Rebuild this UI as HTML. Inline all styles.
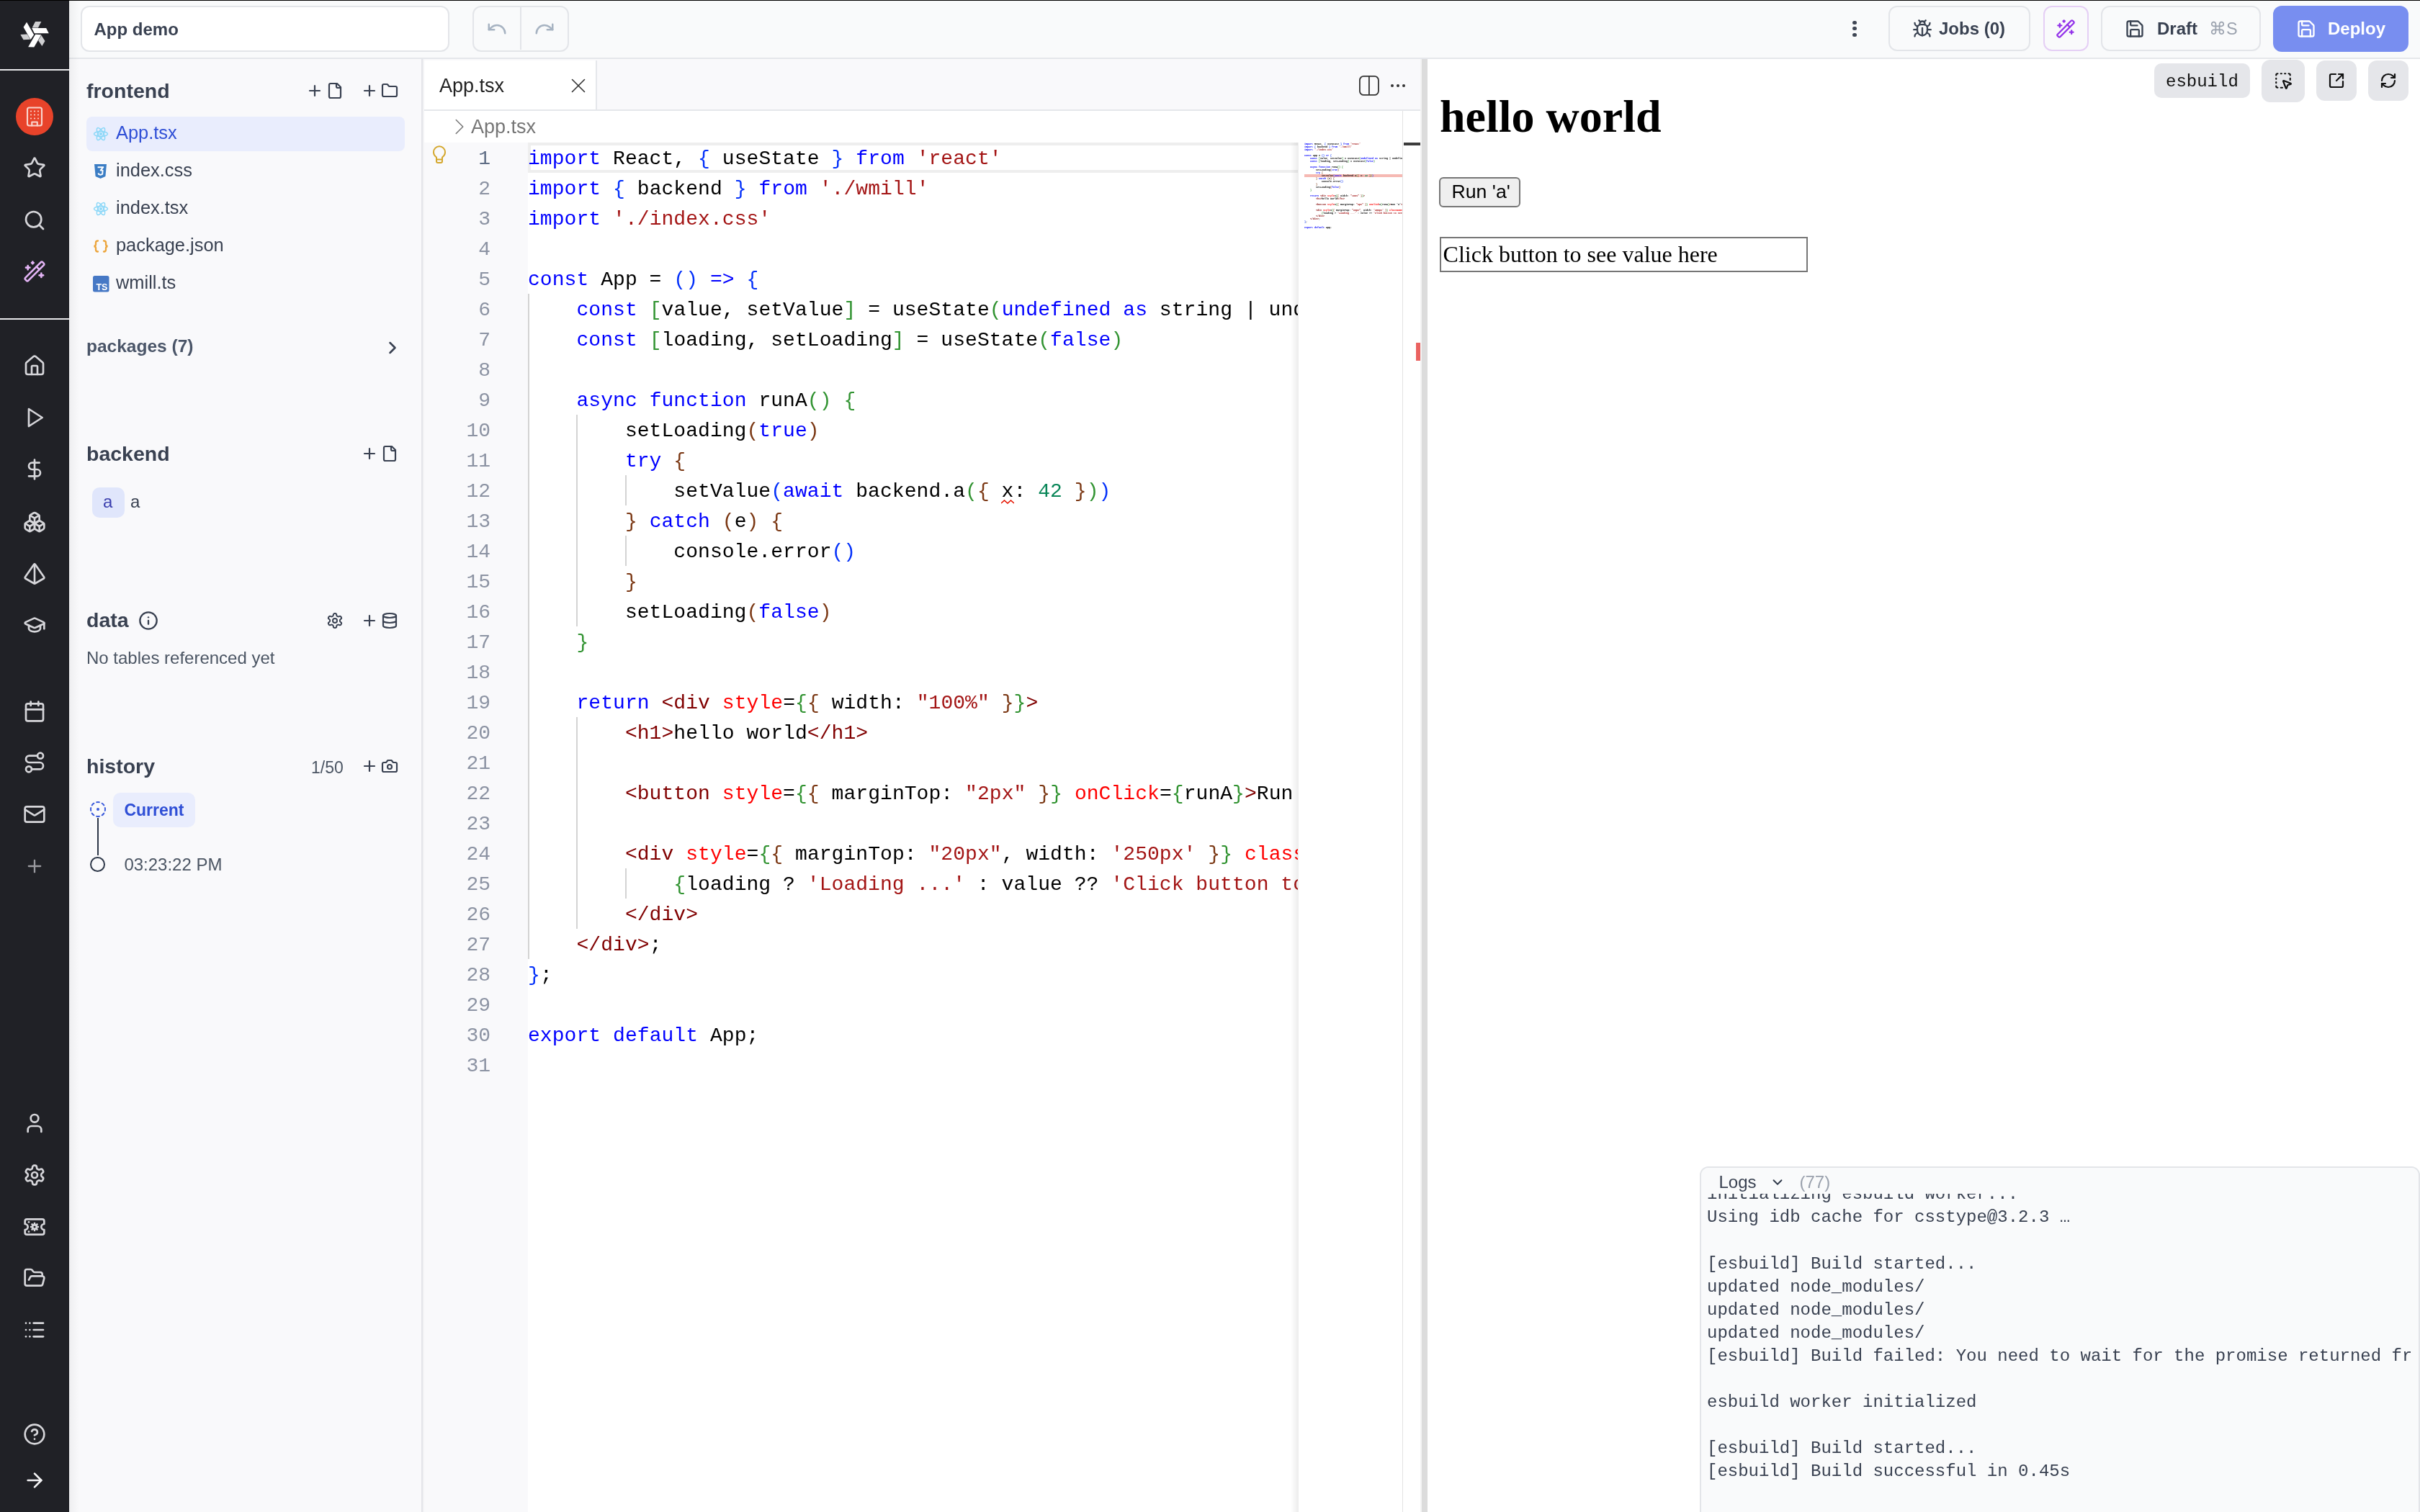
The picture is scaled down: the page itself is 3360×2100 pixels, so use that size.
<!DOCTYPE html><html><head><meta charset="utf-8"><title>App demo</title><style>html,body{margin:0;padding:0;overflow:hidden;background:#fff}body{width:3360px;height:2100px;position:relative}svg{display:block}#root{position:absolute;left:0;top:0;width:3360px;height:2100px;will-change:transform}</style></head><body><div id="root">
<div style="position:absolute;left:0px;top:0px;width:96px;height:2100px;background:#202126"></div>
<div style="position:absolute;left:96px;top:0px;width:3264px;height:80px;background:#f9fafb"></div>
<div style="position:absolute;left:0px;top:0px;width:3360px;height:1px;background:#000"></div>
<div style="position:absolute;left:96px;top:80px;width:3264px;height:2px;background:#e5e7eb"></div>
<div style="position:absolute;left:96px;top:82px;width:490px;height:2018px;background:#f9f9fb"></div>
<div style="position:absolute;left:96px;top:0px;width:14px;height:2100px;background:linear-gradient(90deg,rgba(0,0,0,0.045),rgba(0,0,0,0))"></div>
<div style="position:absolute;left:585px;top:82px;width:2px;height:2018px;background:#e3e4e9"></div>
<div style="position:absolute;left:587px;top:82px;width:2px;height:2018px;background:#f3f3f5"></div>
<div style="position:absolute;left:0px;top:96px;width:96px;height:2px;background:#e8e8ea"></div>
<div style="position:absolute;left:0px;top:442px;width:96px;height:2px;background:#e8e8ea"></div>
<svg style="position:absolute;left:18px;top:18px" width="60" height="60" viewBox="0 0 60 60"><g transform="translate(30,29.4)"><g transform="rotate(0)"><polygon points="-3.8,-8.5 16.1,-8.5 19.8,-1.2 -0.2,-1.2" fill="#ffffff"/><polygon points="1.0,-17.3 9.3,-17.3 5.0,-8.9 -3.4,-8.9" fill="#cfcfd1"/></g><g transform="rotate(120)"><polygon points="-3.8,-8.5 16.1,-8.5 19.8,-1.2 -0.2,-1.2" fill="#ffffff"/><polygon points="1.0,-17.3 9.3,-17.3 5.0,-8.9 -3.4,-8.9" fill="#cfcfd1"/></g><g transform="rotate(240)"><polygon points="-3.8,-8.5 16.1,-8.5 19.8,-1.2 -0.2,-1.2" fill="#ffffff"/><polygon points="1.0,-17.3 9.3,-17.3 5.0,-8.9 -3.4,-8.9" fill="#cfcfd1"/></g></g></svg>
<div style="position:absolute;left:22px;top:136px;width:52px;height:52px;border-radius:50%;background:#e8432a"></div>
<svg style="position:absolute;left:33.00px;top:147.00px;" width="30" height="30" viewBox="0 0 24 24" fill="none" stroke="#f9d5cd" stroke-width="1.7" stroke-linecap="round" stroke-linejoin="round"><rect width="16" height="20" x="4" y="2" rx="2" ry="2"/><path d="M9 22v-4h6v4"/><path d="M8 6h.01"/><path d="M16 6h.01"/><path d="M12 6h.01"/><path d="M12 10h.01"/><path d="M12 14h.01"/><path d="M16 10h.01"/><path d="M16 14h.01"/><path d="M8 10h.01"/><path d="M8 14h.01"/></svg>
<svg style="position:absolute;left:32.00px;top:217.00px;" width="32" height="32" viewBox="0 0 24 24" fill="none" stroke="#d6d6da" stroke-width="2" stroke-linecap="round" stroke-linejoin="round"><path d="M11.525 2.295a.53.53 0 0 1 .95 0l2.31 4.679a2.123 2.123 0 0 0 1.595 1.16l5.166.756a.53.53 0 0 1 .294.904l-3.736 3.638a2.123 2.123 0 0 0-.611 1.878l.882 5.14a.53.53 0 0 1-.771.56l-4.618-2.428a2.122 2.122 0 0 0-1.973 0L6.396 21.01a.53.53 0 0 1-.77-.56l.881-5.139a2.122 2.122 0 0 0-.611-1.879L2.16 9.795a.53.53 0 0 1 .294-.906l5.165-.755a2.122 2.122 0 0 0 1.597-1.16z"/></svg>
<svg style="position:absolute;left:32.00px;top:289.50px;" width="32" height="32" viewBox="0 0 24 24" fill="none" stroke="#d6d6da" stroke-width="2" stroke-linecap="round" stroke-linejoin="round"><circle cx="11" cy="11" r="8"/><path d="m21 21-4.3-4.3"/></svg>
<svg style="position:absolute;left:32.00px;top:361.00px;" width="32" height="32" viewBox="0 0 24 24" fill="none" stroke="#e3b4f5" stroke-width="2" stroke-linecap="round" stroke-linejoin="round"><path d="m21.64 3.64-1.28-1.28a1.21 1.21 0 0 0-1.72 0L2.36 18.64a1.21 1.21 0 0 0 0 1.72l1.28 1.28a1.2 1.2 0 0 0 1.72 0L21.64 5.36a1.2 1.2 0 0 0 0-1.72"/><path d="m14 7 3 3"/><path d="M5 6v4"/><path d="M19 14v4"/><path d="M10 2v2"/><path d="M7 8H3"/><path d="M21 16h-4"/><path d="M11 3H9"/></svg>
<svg style="position:absolute;left:32.00px;top:491.50px;" width="32" height="32" viewBox="0 0 24 24" fill="none" stroke="#d6d6da" stroke-width="2" stroke-linecap="round" stroke-linejoin="round"><path d="M15 21v-8a1 1 0 0 0-1-1h-4a1 1 0 0 0-1 1v8"/><path d="M3 10a2 2 0 0 1 .709-1.528l7-5.999a2 2 0 0 1 2.582 0l7 5.999A2 2 0 0 1 21 10v9a2 2 0 0 1-2 2H5a2 2 0 0 1-2-2z"/></svg>
<svg style="position:absolute;left:32.00px;top:564.00px;" width="32" height="32" viewBox="0 0 24 24" fill="none" stroke="#d6d6da" stroke-width="2" stroke-linecap="round" stroke-linejoin="round"><polygon points="6 3 20 12 6 21 6 3"/></svg>
<svg style="position:absolute;left:32.00px;top:635.50px;" width="32" height="32" viewBox="0 0 24 24" fill="none" stroke="#d6d6da" stroke-width="2" stroke-linecap="round" stroke-linejoin="round"><line x1="12" x2="12" y1="2" y2="22"/><path d="M17 5H9.5a3.5 3.5 0 0 0 0 7h5a3.5 3.5 0 0 1 0 7H6"/></svg>
<svg style="position:absolute;left:32.00px;top:709.00px;" width="32" height="32" viewBox="0 0 24 24" fill="none" stroke="#d6d6da" stroke-width="2" stroke-linecap="round" stroke-linejoin="round"><path d="M2.97 12.92A2 2 0 0 0 2 14.63v3.24a2 2 0 0 0 .97 1.71l3 1.8a2 2 0 0 0 2.06 0L12 19v-5.5l-5-3-4.03 2.42Z"/><path d="m7 16.5-4.74-2.85"/><path d="m7 16.5 5-3"/><path d="M7 16.5v5.17"/><path d="M12 13.5V19l3.97 2.38a2 2 0 0 0 2.06 0l3-1.8a2 2 0 0 0 .97-1.71v-3.24a2 2 0 0 0-.97-1.71L17 10.5l-5 3Z"/><path d="m17 16.5-5-3"/><path d="m17 16.5 4.74-2.85"/><path d="M17 16.5v5.17"/><path d="M7.97 4.42A2 2 0 0 0 7 6.13v4.37l5 3 5-3V6.13a2 2 0 0 0-.97-1.71l-3-1.8a2 2 0 0 0-2.06 0l-3 1.8Z"/><path d="M12 8 7.26 5.15"/><path d="m12 8 4.74-2.85"/><path d="M12 13.5V8"/></svg>
<svg style="position:absolute;left:32.00px;top:781.00px;" width="32" height="32" viewBox="0 0 24 24" fill="none" stroke="#d6d6da" stroke-width="2" stroke-linecap="round" stroke-linejoin="round"><path d="M2.5 16.88a1 1 0 0 1-.32-1.43l9-13.02a1 1 0 0 1 1.64 0l9 13.01a1 1 0 0 1-.32 1.44l-8.51 4.86a2 2 0 0 1-1.98 0Z"/><path d="M12 2v20"/></svg>
<svg style="position:absolute;left:32.00px;top:851.50px;" width="32" height="32" viewBox="0 0 24 24" fill="none" stroke="#d6d6da" stroke-width="2" stroke-linecap="round" stroke-linejoin="round"><path d="M21.42 10.922a1 1 0 0 0-.019-1.838L12.83 5.18a2 2 0 0 0-1.66 0L2.6 9.08a1 1 0 0 0 0 1.832l8.57 3.908a2 2 0 0 0 1.66 0z"/><path d="M22 10v6"/><path d="M6 12.5V16a6 3 0 0 0 12 0v-3.5"/></svg>
<svg style="position:absolute;left:32.00px;top:971.50px;" width="32" height="32" viewBox="0 0 24 24" fill="none" stroke="#d6d6da" stroke-width="2" stroke-linecap="round" stroke-linejoin="round"><path d="M8 2v4"/><path d="M16 2v4"/><rect width="18" height="18" x="3" y="4" rx="2"/><path d="M3 10h18"/></svg>
<svg style="position:absolute;left:32.00px;top:1043.00px;" width="32" height="32" viewBox="0 0 24 24" fill="none" stroke="#d6d6da" stroke-width="2" stroke-linecap="round" stroke-linejoin="round"><circle cx="6" cy="19" r="3"/><path d="M9 19h8.5a3.5 3.5 0 0 0 0-7h-11a3.5 3.5 0 0 1 0-7H15"/><circle cx="18" cy="5" r="3"/></svg>
<svg style="position:absolute;left:32.00px;top:1114.50px;" width="32" height="32" viewBox="0 0 24 24" fill="none" stroke="#d6d6da" stroke-width="2" stroke-linecap="round" stroke-linejoin="round"><rect width="20" height="16" x="2" y="4" rx="2"/><path d="m22 7-8.97 5.7a1.94 1.94 0 0 1-2.06 0L2 7"/></svg>
<svg style="position:absolute;left:32.00px;top:1543.50px;" width="32" height="32" viewBox="0 0 24 24" fill="none" stroke="#d6d6da" stroke-width="2" stroke-linecap="round" stroke-linejoin="round"><path d="M19 21v-2a4 4 0 0 0-4-4H9a4 4 0 0 0-4 4v2"/><circle cx="12" cy="7" r="4"/></svg>
<svg style="position:absolute;left:32.00px;top:1615.50px;" width="32" height="32" viewBox="0 0 24 24" fill="none" stroke="#d6d6da" stroke-width="2" stroke-linecap="round" stroke-linejoin="round"><path d="M12.22 2h-.44a2 2 0 0 0-2 2v.18a2 2 0 0 1-1 1.73l-.43.25a2 2 0 0 1-2 0l-.15-.08a2 2 0 0 0-2.73.73l-.22.38a2 2 0 0 0 .73 2.73l.15.1a2 2 0 0 1 1 1.72v.51a2 2 0 0 1-1 1.74l-.15.09a2 2 0 0 0-.73 2.73l.22.38a2 2 0 0 0 2.73.73l.15-.08a2 2 0 0 1 2 0l.43.25a2 2 0 0 1 1 1.73V20a2 2 0 0 0 2 2h.44a2 2 0 0 0 2-2v-.18a2 2 0 0 1 1-1.73l.43-.25a2 2 0 0 1 2 0l.15.08a2 2 0 0 0 2.73-.73l.22-.39a2 2 0 0 0-.73-2.73l-.15-.08a2 2 0 0 1-1-1.74v-.5a2 2 0 0 1 1-1.74l.15-.09a2 2 0 0 0 .73-2.73l-.22-.38a2 2 0 0 0-2.73-.73l-.15.08a2 2 0 0 1-2 0l-.43-.25a2 2 0 0 1-1-1.73V4a2 2 0 0 0-2-2z"/><circle cx="12" cy="12" r="3"/></svg>
<svg style="position:absolute;left:32.00px;top:1687.50px;" width="32" height="32" viewBox="0 0 24 24" fill="none" stroke="#d6d6da" stroke-width="2" stroke-linecap="round" stroke-linejoin="round"><path d="M4 4h16a2 2 0 0 1 2 2v3a2 2 0 0 0 0 6v3a2 2 0 0 1-2 2H4a2 2 0 0 1-2-2v-3a2 2 0 0 0 0-6V6a2 2 0 0 1 2-2z"/><circle cx="12" cy="12" r="2.2"/><path d="M12 8.3v1.4"/><path d="M12 14.3v1.4"/><path d="M8.3 12h1.4"/><path d="M14.3 12h1.4"/><path d="M9.4 9.4l1 1"/><path d="M13.6 13.6l1 1"/><path d="M14.6 9.4l-1 1"/><path d="M10.4 13.6l-1 1"/><path d="M6 7h.01"/><path d="M6 17h.01"/></svg>
<svg style="position:absolute;left:32.00px;top:1759.00px;" width="32" height="32" viewBox="0 0 24 24" fill="none" stroke="#d6d6da" stroke-width="2" stroke-linecap="round" stroke-linejoin="round"><path d="m6 14 1.5-2.9A2 2 0 0 1 9.24 10H20a2 2 0 0 1 1.94 2.5l-1.54 6a2 2 0 0 1-1.95 1.5H4a2 2 0 0 1-2-2V5a2 2 0 0 1 2-2h3.9a2 2 0 0 1 1.69.9l.81 1.2a2 2 0 0 0 1.67.9H18a2 2 0 0 1 2 2v2"/></svg>
<svg style="position:absolute;left:32.00px;top:1831.00px;" width="32" height="32" viewBox="0 0 24 24" fill="none" stroke="#d6d6da" stroke-width="2" stroke-linecap="round" stroke-linejoin="round"><path d="M3 5h.01"/><path d="M7 5h.01"/><path d="M3 12h.01"/><path d="M7 12h.01"/><path d="M3 19h.01"/><path d="M7 19h.01"/><path d="M11 5h10"/><path d="M11 12h10"/><path d="M11 19h10"/></svg>
<svg style="position:absolute;left:32.00px;top:1976.00px;" width="32" height="32" viewBox="0 0 24 24" fill="none" stroke="#d6d6da" stroke-width="2" stroke-linecap="round" stroke-linejoin="round"><circle cx="12" cy="12" r="10"/><path d="M9.09 9a3 3 0 0 1 5.83 1c0 2-3 3-3 3"/><path d="M12 17h.01"/></svg>
<svg style="position:absolute;left:32.00px;top:2039.50px;" width="32" height="32" viewBox="0 0 24 24" fill="none" stroke="#f4f4f5" stroke-width="2" stroke-linecap="round" stroke-linejoin="round"><path d="M5 12h14"/><path d="m12 5 7 7-7 7"/></svg>
<svg style="position:absolute;left:34.00px;top:1189.00px;" width="28" height="28" viewBox="0 0 24 24" fill="none" stroke="#9a9aa0" stroke-width="2" stroke-linecap="round" stroke-linejoin="round"><path d="M5 12h14"/><path d="M12 5v14"/></svg>
<div style="position:absolute;left:112px;top:8px;width:508px;height:59.5px;border:2px solid #e3e5e9;border-radius:12px;background:#fff"></div>
<div style="position:absolute;left:130.50px;top:29.48px;font:700 24px/24px 'Liberation Sans', sans-serif;color:#394151;white-space:pre;">App demo</div>
<div style="position:absolute;left:656px;top:8px;width:130px;height:59.5px;border:2px solid #e3e5e9;border-radius:12px"></div>
<div style="position:absolute;left:721.5px;top:10px;width:2px;height:59px;background:#e3e5e9"></div>
<svg style="position:absolute;left:675.00px;top:25.00px;" width="30" height="30" viewBox="0 0 24 24" fill="none" stroke="#a7b3c2" stroke-width="2" stroke-linecap="round" stroke-linejoin="round"><path d="M3 7v6h6"/><path d="M21 17a9 9 0 0 0-9-9 9 9 0 0 0-6 2.3L3 13"/></svg>
<svg style="position:absolute;left:741.00px;top:25.00px;" width="30" height="30" viewBox="0 0 24 24" fill="none" stroke="#a7b3c2" stroke-width="2" stroke-linecap="round" stroke-linejoin="round"><path d="M21 7v6h-6"/><path d="M3 17a9 9 0 0 1 9-9 9 9 0 0 1 6 2.3l3 2.7"/></svg>
<div style="position:absolute;left:2572.4px;top:28.8px;width:5.2px;height:5.2px;border-radius:50%;background:#3f4654"></div>
<div style="position:absolute;left:2572.4px;top:37.2px;width:5.2px;height:5.2px;border-radius:50%;background:#3f4654"></div>
<div style="position:absolute;left:2572.4px;top:45.7px;width:5.2px;height:5.2px;border-radius:50%;background:#3f4654"></div>
<div style="position:absolute;left:2622px;top:8px;width:193px;height:59px;border:2px solid #e3e5e9;border-radius:12px"></div>
<svg style="position:absolute;left:2655.00px;top:26.00px;" width="28" height="28" viewBox="0 0 24 24" fill="none" stroke="#3a4352" stroke-width="2" stroke-linecap="round" stroke-linejoin="round"><path d="m8 2 1.88 1.88"/><path d="M14.12 3.88 16 2"/><path d="M9 7.13v-1a3.003 3.003 0 1 1 6 0v1"/><path d="M12 20c-3.3 0-6-2.7-6-6v-3a4 4 0 0 1 4-4h4a4 4 0 0 1 4 4v3c0 3.3-2.7 6-6 6"/><path d="M12 20v-9"/><path d="M6.53 9C4.6 8.8 3 7.1 3 5"/><path d="M6 13H2"/><path d="M3 21c0-2.1 1.7-3.9 3.8-4"/><path d="M20.97 5c0 2.1-1.6 3.8-3.5 4"/><path d="M22 13h-4"/><path d="M17.2 17c2.1.1 3.8 1.9 3.8 4"/></svg>
<div style="position:absolute;left:2692.00px;top:27.68px;font:700 24px/24px 'Liberation Sans', sans-serif;color:#394151;white-space:pre;">Jobs (0)</div>
<div style="position:absolute;left:2837px;top:8px;width:59px;height:59px;border:2px solid #e5cff5;border-radius:12px"></div>
<svg style="position:absolute;left:2854.00px;top:26.00px;" width="28" height="28" viewBox="0 0 24 24" fill="none" stroke="#9333ea" stroke-width="2" stroke-linecap="round" stroke-linejoin="round"><path d="m21.64 3.64-1.28-1.28a1.21 1.21 0 0 0-1.72 0L2.36 18.64a1.21 1.21 0 0 0 0 1.72l1.28 1.28a1.2 1.2 0 0 0 1.72 0L21.64 5.36a1.2 1.2 0 0 0 0-1.72"/><path d="m14 7 3 3"/><path d="M5 6v4"/><path d="M19 14v4"/><path d="M10 2v2"/><path d="M7 8H3"/><path d="M21 16h-4"/><path d="M11 3H9"/></svg>
<div style="position:absolute;left:2916.5px;top:8px;width:218.5px;height:59px;border:2px solid #e3e5e9;border-radius:12px"></div>
<svg style="position:absolute;left:2950.00px;top:26.00px;" width="28" height="28" viewBox="0 0 24 24" fill="none" stroke="#3a4352" stroke-width="2" stroke-linecap="round" stroke-linejoin="round"><path d="M15.2 3a2 2 0 0 1 1.4.6l3.8 3.8a2 2 0 0 1 .6 1.4V19a2 2 0 0 1-2 2H5a2 2 0 0 1-2-2V5a2 2 0 0 1 2-2z"/><path d="M17 21v-7a1 1 0 0 0-1-1H8a1 1 0 0 0-1 1v7"/><path d="M7 3v4a1 1 0 0 0 1 1h7"/></svg>
<div style="position:absolute;left:2995.00px;top:28.18px;font:700 24px/24px 'Liberation Sans', sans-serif;color:#394151;white-space:pre;">Draft</div>
<div style="position:absolute;left:3067.00px;top:28.60px;font:400 23.5px/23.5px 'Liberation Sans', sans-serif;color:#9ca3af;white-space:pre;">⌘S</div>
<div style="position:absolute;left:3156px;top:8px;width:188px;height:64px;border-radius:12px;background:#788ef0"></div>
<svg style="position:absolute;left:3187.50px;top:26.00px;" width="28" height="28" viewBox="0 0 24 24" fill="none" stroke="#ffffff" stroke-width="2" stroke-linecap="round" stroke-linejoin="round"><path d="M15.2 3a2 2 0 0 1 1.4.6l3.8 3.8a2 2 0 0 1 .6 1.4V19a2 2 0 0 1-2 2H5a2 2 0 0 1-2-2V5a2 2 0 0 1 2-2z"/><path d="M17 21v-7a1 1 0 0 0-1-1H8a1 1 0 0 0-1 1v7"/><path d="M7 3v4a1 1 0 0 0 1 1h7"/></svg>
<div style="position:absolute;left:3232.00px;top:28.18px;font:700 24px/24px 'Liberation Sans', sans-serif;color:#ffffff;white-space:pre;">Deploy</div>
<div style="position:absolute;left:120.00px;top:111.87px;font:700 28.5px/28.5px 'Liberation Sans', sans-serif;color:#394151;white-space:pre;">frontend</div>
<svg style="position:absolute;left:425.00px;top:114.00px;" width="24" height="24" viewBox="0 0 24 24" fill="none" stroke="#394151" stroke-width="2.2" stroke-linecap="round" stroke-linejoin="round"><path d="M5 12h14"/><path d="M12 5v14"/></svg>
<svg style="position:absolute;left:453.00px;top:114.00px;" width="24" height="24" viewBox="0 0 24 24" fill="none" stroke="#394151" stroke-width="2.2" stroke-linecap="round" stroke-linejoin="round"><path d="M15 2H6a2 2 0 0 0-2 2v16a2 2 0 0 0 2 2h12a2 2 0 0 0 2-2V7Z"/><path d="M14 2v4a2 2 0 0 0 2 2h4"/></svg>
<svg style="position:absolute;left:501.00px;top:114.00px;" width="24" height="24" viewBox="0 0 24 24" fill="none" stroke="#394151" stroke-width="2.2" stroke-linecap="round" stroke-linejoin="round"><path d="M5 12h14"/><path d="M12 5v14"/></svg>
<svg style="position:absolute;left:529.00px;top:114.00px;" width="24" height="24" viewBox="0 0 24 24" fill="none" stroke="#394151" stroke-width="2.2" stroke-linecap="round" stroke-linejoin="round"><path d="M20 20a2 2 0 0 0 2-2V8a2 2 0 0 0-2-2h-7.9a2 2 0 0 1-1.69-.9L9.6 3.9A2 2 0 0 0 7.93 3H4a2 2 0 0 0-2 2v13a2 2 0 0 0 2 2Z"/></svg>
<div style="position:absolute;left:120px;top:162px;width:442px;height:48px;background:#e9edfd;border-radius:8px"></div>
<svg style="position:absolute;left:129px;top:176px" width="22" height="20" viewBox="-11 -10 22 20"><g fill="none" stroke="#8dd8f8" stroke-width="1.5"><ellipse rx="9.5" ry="3.6"/><ellipse rx="9.5" ry="3.6" transform="rotate(60)"/><ellipse rx="9.5" ry="3.6" transform="rotate(120)"/></g><circle r="2" fill="#8dd8f8"/></svg>
<div style="position:absolute;left:161.00px;top:172.49px;font:400 25.4px/25.4px 'Liberation Sans', sans-serif;color:#2f4fd6;white-space:pre;">App.tsx</div>
<svg style="position:absolute;left:130px;top:227px" width="19" height="22" viewBox="0 0 19 22"><path d="M1 1h17l-1.6 17L9.5 21 2.6 18z" fill="#3b7dc4"/><path d="M5.6 5.2H13.4L9.6 9.6H12.6L12.2 14.9L9.5 15.9L6.8 14.9L6.7 13.4" fill="none" stroke="#fff" stroke-width="1.9" stroke-linejoin="round"/></svg>
<div style="position:absolute;left:161.00px;top:224.49px;font:400 25.4px/25.4px 'Liberation Sans', sans-serif;color:#394151;white-space:pre;">index.css</div>
<svg style="position:absolute;left:129px;top:280px" width="22" height="20" viewBox="-11 -10 22 20"><g fill="none" stroke="#8dd8f8" stroke-width="1.5"><ellipse rx="9.5" ry="3.6"/><ellipse rx="9.5" ry="3.6" transform="rotate(60)"/><ellipse rx="9.5" ry="3.6" transform="rotate(120)"/></g><circle r="2" fill="#8dd8f8"/></svg>
<div style="position:absolute;left:161.00px;top:276.49px;font:400 25.4px/25.4px 'Liberation Sans', sans-serif;color:#394151;white-space:pre;">index.tsx</div>
<svg style="position:absolute;left:129px;top:331px" width="22" height="22" viewBox="0 0 22 22"><g fill="none" stroke="#eca53c" stroke-width="2.3" stroke-linecap="round"><path d="M7 3.5c-2 0-3 .8-3 2.5v2.3c0 1.2-.8 2.5-2.5 2.7 1.7.2 2.5 1.5 2.5 2.7V16c0 1.7 1 2.5 3 2.5"/><path d="M15 3.5c2 0 3 .8 3 2.5v2.3c0 1.2.8 2.5 2.5 2.7-1.7.2-2.5 1.5-2.5 2.7V16c0 1.7-1 2.5-3 2.5"/></g></svg>
<div style="position:absolute;left:161.00px;top:328.49px;font:400 25.4px/25.4px 'Liberation Sans', sans-serif;color:#394151;white-space:pre;">package.json</div>
<svg style="position:absolute;left:129px;top:383px" width="22.5" height="22.5" viewBox="0 0 22.5 22.5"><rect width="22.5" height="22.5" rx="2.5" fill="#4678c5"/><text x="12.4" y="20" font-family="Liberation Sans" font-weight="700" font-size="12.5" fill="#fff" text-anchor="middle">TS</text></svg>
<div style="position:absolute;left:161.00px;top:380.49px;font:400 25.4px/25.4px 'Liberation Sans', sans-serif;color:#394151;white-space:pre;">wmill.ts</div>
<div style="position:absolute;left:120.00px;top:468.86px;font:700 24.5px/24.5px 'Liberation Sans', sans-serif;color:#4a5568;white-space:pre;">packages (7)</div>
<svg style="position:absolute;left:531.00px;top:468.50px;" width="28" height="28" viewBox="0 0 24 24" fill="none" stroke="#394151" stroke-width="2.2" stroke-linecap="round" stroke-linejoin="round"><path d="m9 18 6-6-6-6"/></svg>
<div style="position:absolute;left:120.00px;top:616.27px;font:700 28.5px/28.5px 'Liberation Sans', sans-serif;color:#394151;white-space:pre;">backend</div>
<svg style="position:absolute;left:501.00px;top:618.00px;" width="24" height="24" viewBox="0 0 24 24" fill="none" stroke="#394151" stroke-width="2.2" stroke-linecap="round" stroke-linejoin="round"><path d="M5 12h14"/><path d="M12 5v14"/></svg>
<svg style="position:absolute;left:529.00px;top:618.00px;" width="24" height="24" viewBox="0 0 24 24" fill="none" stroke="#394151" stroke-width="2.2" stroke-linecap="round" stroke-linejoin="round"><path d="M15 2H6a2 2 0 0 0-2 2v16a2 2 0 0 0 2 2h12a2 2 0 0 0 2-2V7Z"/><path d="M14 2v4a2 2 0 0 0 2 2h4"/></svg>
<div style="position:absolute;left:128px;top:677px;width:45px;height:42px;background:#e0e6fb;border-radius:10px"></div>
<div style="position:absolute;left:143.00px;top:684.68px;font:400 24px/24px 'Liberation Sans', sans-serif;color:#3b3fae;white-space:pre;">a</div>
<div style="position:absolute;left:181.00px;top:684.68px;font:400 24px/24px 'Liberation Sans', sans-serif;color:#394151;white-space:pre;">a</div>
<div style="position:absolute;left:120.00px;top:847.27px;font:700 28.5px/28.5px 'Liberation Sans', sans-serif;color:#394151;white-space:pre;">data</div>
<svg style="position:absolute;left:191.50px;top:848.00px;" width="28" height="28" viewBox="0 0 24 24" fill="none" stroke="#394151" stroke-width="2" stroke-linecap="round" stroke-linejoin="round"><circle cx="12" cy="12" r="10"/><path d="M12 16v-4"/><path d="M12 8h.01"/></svg>
<svg style="position:absolute;left:452.50px;top:850.00px;" width="24" height="24" viewBox="0 0 24 24" fill="none" stroke="#394151" stroke-width="2" stroke-linecap="round" stroke-linejoin="round"><path d="M12.22 2h-.44a2 2 0 0 0-2 2v.18a2 2 0 0 1-1 1.73l-.43.25a2 2 0 0 1-2 0l-.15-.08a2 2 0 0 0-2.73.73l-.22.38a2 2 0 0 0 .73 2.73l.15.1a2 2 0 0 1 1 1.72v.51a2 2 0 0 1-1 1.74l-.15.09a2 2 0 0 0-.73 2.73l.22.38a2 2 0 0 0 2.73.73l.15-.08a2 2 0 0 1 2 0l.43.25a2 2 0 0 1 1 1.73V20a2 2 0 0 0 2 2h.44a2 2 0 0 0 2-2v-.18a2 2 0 0 1 1-1.73l.43-.25a2 2 0 0 1 2 0l.15.08a2 2 0 0 0 2.73-.73l.22-.39a2 2 0 0 0-.73-2.73l-.15-.08a2 2 0 0 1-1-1.74v-.5a2 2 0 0 1 1-1.74l.15-.09a2 2 0 0 0 .73-2.73l-.22-.38a2 2 0 0 0-2.73-.73l-.15.08a2 2 0 0 1-2 0l-.43-.25a2 2 0 0 1-1-1.73V4a2 2 0 0 0-2-2z"/><circle cx="12" cy="12" r="3"/></svg>
<svg style="position:absolute;left:501.00px;top:850.00px;" width="24" height="24" viewBox="0 0 24 24" fill="none" stroke="#394151" stroke-width="2.2" stroke-linecap="round" stroke-linejoin="round"><path d="M5 12h14"/><path d="M12 5v14"/></svg>
<svg style="position:absolute;left:529.00px;top:850.00px;" width="24" height="24" viewBox="0 0 24 24" fill="none" stroke="#394151" stroke-width="2.2" stroke-linecap="round" stroke-linejoin="round"><ellipse cx="12" cy="5" rx="9" ry="3"/><path d="M3 5V19A9 3 0 0 0 21 19V5"/><path d="M3 12A9 3 0 0 0 21 12"/></svg>
<div style="position:absolute;left:120.00px;top:902.48px;font:400 24px/24px 'Liberation Sans', sans-serif;color:#4b5563;white-space:pre;">No tables referenced yet</div>
<div style="position:absolute;left:120.00px;top:1049.87px;font:700 28.5px/28.5px 'Liberation Sans', sans-serif;color:#394151;white-space:pre;">history</div>
<div style="position:absolute;left:432.00px;top:1054.53px;font:400 23px/23px 'Liberation Sans', sans-serif;color:#4b5563;white-space:pre;">1/50</div>
<svg style="position:absolute;left:501.00px;top:1052.00px;" width="24" height="24" viewBox="0 0 24 24" fill="none" stroke="#394151" stroke-width="2.2" stroke-linecap="round" stroke-linejoin="round"><path d="M5 12h14"/><path d="M12 5v14"/></svg>
<svg style="position:absolute;left:529.00px;top:1052.00px;" width="24" height="24" viewBox="0 0 24 24" fill="none" stroke="#394151" stroke-width="2.2" stroke-linecap="round" stroke-linejoin="round"><path d="M14.5 4h-5L7 7H4a2 2 0 0 0-2 2v9a2 2 0 0 0 2 2h16a2 2 0 0 0 2-2V9a2 2 0 0 0-2-2h-3l-2.5-3z"/><circle cx="12" cy="13" r="3"/></svg>
<svg style="position:absolute;left:123.70px;top:1111.60px;" width="24" height="24" viewBox="0 0 24 24" fill="none" stroke="#3b5bdb" stroke-width="2" stroke-linecap="round" stroke-linejoin="round"><path d="M10.1 2.182a10 10 0 0 1 3.8 0"/><path d="M13.9 21.818a10 10 0 0 1-3.8 0"/><path d="M17.609 3.721a10 10 0 0 1 2.69 2.7"/><path d="M2.182 13.9a10 10 0 0 1 0-3.8"/><path d="M20.279 17.609a10 10 0 0 1-2.7 2.69"/><path d="M21.818 10.1a10 10 0 0 1 0 3.8"/><path d="M3.721 6.391a10 10 0 0 1 2.7-2.69"/><path d="M6.391 20.279a10 10 0 0 1-2.69-2.7"/><circle cx="12" cy="12" r="1" fill="currentColor"/></svg>
<div style="position:absolute;left:156.5px;top:1100.5px;width:114px;height:48px;background:#e9edfd;border-radius:10px"></div>
<div style="position:absolute;left:172.40px;top:1113.53px;font:700 23px/23px 'Liberation Sans', sans-serif;color:#2f4fd6;white-space:pre;">Current</div>
<div style="position:absolute;left:134.7px;top:1136px;width:2px;height:52px;background:#2d3748"></div>
<div style="position:absolute;left:125px;top:1189.5px;width:17px;height:17px;border:2.2px solid #2d3748;border-radius:50%"></div>
<div style="position:absolute;left:172.40px;top:1188.68px;font:400 24px/24px 'Liberation Sans', sans-serif;color:#4b5563;white-space:pre;">03:23:22 PM</div>
<div style="position:absolute;left:589px;top:82px;width:1385px;height:70px;background:#f9f9fb"></div>
<div style="position:absolute;left:589px;top:84px;width:238px;height:68px;background:#ffffff"></div>
<div style="position:absolute;left:827px;top:84px;width:2px;height:68px;background:#e5e7eb"></div>
<div style="position:absolute;left:589px;top:152px;width:1385px;height:2px;background:#e5e7eb"></div>
<div style="position:absolute;left:610.00px;top:105.84px;font:400 27px/27px 'Liberation Sans', sans-serif;color:#222222;white-space:pre;">App.tsx</div>
<svg style="position:absolute;left:786.00px;top:102.00px;" width="34" height="34" viewBox="0 0 24 24" fill="none" stroke="#333333" stroke-width="1.15" stroke-linecap="round" stroke-linejoin="round"><path d="M18 6 6 18"/><path d="m6 6 12 12"/></svg>
<svg style="position:absolute;left:1886px;top:104px" width="30" height="30" viewBox="0 0 30 30"><rect x="1.9" y="1.9" width="26" height="26" rx="5.5" fill="none" stroke="#333" stroke-width="1.8"/><path d="M14.9 2v26" stroke="#333" stroke-width="1.8"/></svg>
<div style="position:absolute;left:1930.5px;top:116.7px;width:4.6px;height:4.6px;border-radius:50%;background:#333"></div>
<div style="position:absolute;left:1938.6px;top:116.7px;width:4.6px;height:4.6px;border-radius:50%;background:#333"></div>
<div style="position:absolute;left:1946.6px;top:116.7px;width:4.6px;height:4.6px;border-radius:50%;background:#333"></div>
<div style="position:absolute;left:589px;top:154px;width:1385px;height:1946px;background:#ffffff"></div>
<div style="position:absolute;left:654.00px;top:162.74px;font:400 27px/27px 'Liberation Sans', sans-serif;color:#767676;white-space:pre;">App.tsx</div>
<svg style="position:absolute;left:618.60px;top:157.00px;" width="38" height="38" viewBox="0 0 24 24" fill="none" stroke="#767676" stroke-width="0.95" stroke-linecap="round" stroke-linejoin="round"><path d="m9 18 6-6-6-6"/></svg>
<div style="position:absolute;left:589px;top:198px;width:144px;height:1902px;background:#f9f9fb"></div>
<div style="position:absolute;left:664.2px;top:199.5px;height:42px;font:400 28px/42px 'Liberation Mono', monospace;color:#5f6d85;white-space:pre">1</div>
<div style="position:absolute;left:664.2px;top:241.5px;height:42px;font:400 28px/42px 'Liberation Mono', monospace;color:#8c93a3;white-space:pre">2</div>
<div style="position:absolute;left:664.2px;top:283.5px;height:42px;font:400 28px/42px 'Liberation Mono', monospace;color:#8c93a3;white-space:pre">3</div>
<div style="position:absolute;left:664.2px;top:325.5px;height:42px;font:400 28px/42px 'Liberation Mono', monospace;color:#8c93a3;white-space:pre">4</div>
<div style="position:absolute;left:664.2px;top:367.5px;height:42px;font:400 28px/42px 'Liberation Mono', monospace;color:#8c93a3;white-space:pre">5</div>
<div style="position:absolute;left:664.2px;top:409.5px;height:42px;font:400 28px/42px 'Liberation Mono', monospace;color:#8c93a3;white-space:pre">6</div>
<div style="position:absolute;left:664.2px;top:451.5px;height:42px;font:400 28px/42px 'Liberation Mono', monospace;color:#8c93a3;white-space:pre">7</div>
<div style="position:absolute;left:664.2px;top:493.5px;height:42px;font:400 28px/42px 'Liberation Mono', monospace;color:#8c93a3;white-space:pre">8</div>
<div style="position:absolute;left:664.2px;top:535.5px;height:42px;font:400 28px/42px 'Liberation Mono', monospace;color:#8c93a3;white-space:pre">9</div>
<div style="position:absolute;left:647.4px;top:577.5px;height:42px;font:400 28px/42px 'Liberation Mono', monospace;color:#8c93a3;white-space:pre">10</div>
<div style="position:absolute;left:647.4px;top:619.5px;height:42px;font:400 28px/42px 'Liberation Mono', monospace;color:#8c93a3;white-space:pre">11</div>
<div style="position:absolute;left:647.4px;top:661.5px;height:42px;font:400 28px/42px 'Liberation Mono', monospace;color:#8c93a3;white-space:pre">12</div>
<div style="position:absolute;left:647.4px;top:703.5px;height:42px;font:400 28px/42px 'Liberation Mono', monospace;color:#8c93a3;white-space:pre">13</div>
<div style="position:absolute;left:647.4px;top:745.5px;height:42px;font:400 28px/42px 'Liberation Mono', monospace;color:#8c93a3;white-space:pre">14</div>
<div style="position:absolute;left:647.4px;top:787.5px;height:42px;font:400 28px/42px 'Liberation Mono', monospace;color:#8c93a3;white-space:pre">15</div>
<div style="position:absolute;left:647.4px;top:829.5px;height:42px;font:400 28px/42px 'Liberation Mono', monospace;color:#8c93a3;white-space:pre">16</div>
<div style="position:absolute;left:647.4px;top:871.5px;height:42px;font:400 28px/42px 'Liberation Mono', monospace;color:#8c93a3;white-space:pre">17</div>
<div style="position:absolute;left:647.4px;top:913.5px;height:42px;font:400 28px/42px 'Liberation Mono', monospace;color:#8c93a3;white-space:pre">18</div>
<div style="position:absolute;left:647.4px;top:955.5px;height:42px;font:400 28px/42px 'Liberation Mono', monospace;color:#8c93a3;white-space:pre">19</div>
<div style="position:absolute;left:647.4px;top:997.5px;height:42px;font:400 28px/42px 'Liberation Mono', monospace;color:#8c93a3;white-space:pre">20</div>
<div style="position:absolute;left:647.4px;top:1039.5px;height:42px;font:400 28px/42px 'Liberation Mono', monospace;color:#8c93a3;white-space:pre">21</div>
<div style="position:absolute;left:647.4px;top:1081.5px;height:42px;font:400 28px/42px 'Liberation Mono', monospace;color:#8c93a3;white-space:pre">22</div>
<div style="position:absolute;left:647.4px;top:1123.5px;height:42px;font:400 28px/42px 'Liberation Mono', monospace;color:#8c93a3;white-space:pre">23</div>
<div style="position:absolute;left:647.4px;top:1165.5px;height:42px;font:400 28px/42px 'Liberation Mono', monospace;color:#8c93a3;white-space:pre">24</div>
<div style="position:absolute;left:647.4px;top:1207.5px;height:42px;font:400 28px/42px 'Liberation Mono', monospace;color:#8c93a3;white-space:pre">25</div>
<div style="position:absolute;left:647.4px;top:1249.5px;height:42px;font:400 28px/42px 'Liberation Mono', monospace;color:#8c93a3;white-space:pre">26</div>
<div style="position:absolute;left:647.4px;top:1291.5px;height:42px;font:400 28px/42px 'Liberation Mono', monospace;color:#8c93a3;white-space:pre">27</div>
<div style="position:absolute;left:647.4px;top:1333.5px;height:42px;font:400 28px/42px 'Liberation Mono', monospace;color:#8c93a3;white-space:pre">28</div>
<div style="position:absolute;left:647.4px;top:1375.5px;height:42px;font:400 28px/42px 'Liberation Mono', monospace;color:#8c93a3;white-space:pre">29</div>
<div style="position:absolute;left:647.4px;top:1417.5px;height:42px;font:400 28px/42px 'Liberation Mono', monospace;color:#8c93a3;white-space:pre">30</div>
<div style="position:absolute;left:647.4px;top:1459.5px;height:42px;font:400 28px/42px 'Liberation Mono', monospace;color:#8c93a3;white-space:pre">31</div>
<svg style="position:absolute;left:601px;top:202px" width="18" height="25" viewBox="0 0 18 25"><g fill="none" stroke="#d4a72c" stroke-width="2" stroke-linejoin="round"><path d="M5 16.5C3 15 1 12.8 1 9.3A8 8 0 0 1 17 9.3C17 12.8 15 15 13 16.5V22Q13 24 11 24H7Q5 24 5 22Z"/><path d="M5 19.5H13"/></g></svg>
<div style="position:absolute;left:733px;top:198px;width:1069px;height:1902px;overflow:hidden">
<div style="position:absolute;left:0;top:0;width:1079px;height:34px;border:4px solid #eeeeee;border-right:none"></div>
<div style="position:absolute;left:0.0px;top:210px;width:2px;height:924px;background:#d3d3d3"></div>
<div style="position:absolute;left:67.4px;top:378px;width:2px;height:294px;background:#d3d3d3"></div>
<div style="position:absolute;left:67.4px;top:798px;width:2px;height:294px;background:#d3d3d3"></div>
<div style="position:absolute;left:134.9px;top:462px;width:2px;height:42px;background:#d3d3d3"></div>
<div style="position:absolute;left:134.9px;top:546px;width:2px;height:42px;background:#d3d3d3"></div>
<div style="position:absolute;left:134.9px;top:1008px;width:2px;height:42px;background:#d3d3d3"></div>
<div style="position:absolute;left:0;top:2px;height:42px;font:400 28px/42px 'Liberation Mono', monospace;letter-spacing:0.057px;white-space:pre"><span style="color:#0000ff">import</span><span style="color:#000000"> React, </span><span style="color:#0431fa">{</span><span style="color:#000000"> useState </span><span style="color:#0431fa">}</span><span style="color:#000000"> </span><span style="color:#0000ff">from</span><span style="color:#000000"> </span><span style="color:#a31515">'react'</span></div>
<div style="position:absolute;left:0;top:44px;height:42px;font:400 28px/42px 'Liberation Mono', monospace;letter-spacing:0.057px;white-space:pre"><span style="color:#0000ff">import</span><span style="color:#000000"> </span><span style="color:#0431fa">{</span><span style="color:#000000"> backend </span><span style="color:#0431fa">}</span><span style="color:#000000"> </span><span style="color:#0000ff">from</span><span style="color:#000000"> </span><span style="color:#a31515">'./wmill'</span></div>
<div style="position:absolute;left:0;top:86px;height:42px;font:400 28px/42px 'Liberation Mono', monospace;letter-spacing:0.057px;white-space:pre"><span style="color:#0000ff">import</span><span style="color:#000000"> </span><span style="color:#a31515">'./index.css'</span></div>
<div style="position:absolute;left:0;top:128px;height:42px;font:400 28px/42px 'Liberation Mono', monospace;letter-spacing:0.057px;white-space:pre"></div>
<div style="position:absolute;left:0;top:170px;height:42px;font:400 28px/42px 'Liberation Mono', monospace;letter-spacing:0.057px;white-space:pre"><span style="color:#0000ff">const</span><span style="color:#000000"> App = </span><span style="color:#0431fa">()</span><span style="color:#000000"> </span><span style="color:#0000ff">=&gt;</span><span style="color:#000000"> </span><span style="color:#0431fa">{</span></div>
<div style="position:absolute;left:0;top:212px;height:42px;font:400 28px/42px 'Liberation Mono', monospace;letter-spacing:0.057px;white-space:pre"><span style="color:#000000">    </span><span style="color:#0000ff">const</span><span style="color:#000000"> </span><span style="color:#319331">[</span><span style="color:#000000">value, setValue</span><span style="color:#319331">]</span><span style="color:#000000"> = useState</span><span style="color:#319331">(</span><span style="color:#0000ff">undefined</span><span style="color:#000000"> </span><span style="color:#0000ff">as</span><span style="color:#000000"> string | undefined</span><span style="color:#319331">)</span></div>
<div style="position:absolute;left:0;top:254px;height:42px;font:400 28px/42px 'Liberation Mono', monospace;letter-spacing:0.057px;white-space:pre"><span style="color:#000000">    </span><span style="color:#0000ff">const</span><span style="color:#000000"> </span><span style="color:#319331">[</span><span style="color:#000000">loading, setLoading</span><span style="color:#319331">]</span><span style="color:#000000"> = useState</span><span style="color:#319331">(</span><span style="color:#0000ff">false</span><span style="color:#319331">)</span></div>
<div style="position:absolute;left:0;top:296px;height:42px;font:400 28px/42px 'Liberation Mono', monospace;letter-spacing:0.057px;white-space:pre"></div>
<div style="position:absolute;left:0;top:338px;height:42px;font:400 28px/42px 'Liberation Mono', monospace;letter-spacing:0.057px;white-space:pre"><span style="color:#000000">    </span><span style="color:#0000ff">async</span><span style="color:#000000"> </span><span style="color:#0000ff">function</span><span style="color:#000000"> runA</span><span style="color:#319331">()</span><span style="color:#000000"> </span><span style="color:#319331">{</span></div>
<div style="position:absolute;left:0;top:380px;height:42px;font:400 28px/42px 'Liberation Mono', monospace;letter-spacing:0.057px;white-space:pre"><span style="color:#000000">        setLoading</span><span style="color:#7b3814">(</span><span style="color:#0000ff">true</span><span style="color:#7b3814">)</span></div>
<div style="position:absolute;left:0;top:422px;height:42px;font:400 28px/42px 'Liberation Mono', monospace;letter-spacing:0.057px;white-space:pre"><span style="color:#000000">        </span><span style="color:#0000ff">try</span><span style="color:#000000"> </span><span style="color:#7b3814">{</span></div>
<div style="position:absolute;left:0;top:464px;height:42px;font:400 28px/42px 'Liberation Mono', monospace;letter-spacing:0.057px;white-space:pre"><span style="color:#000000">            setValue</span><span style="color:#0431fa">(</span><span style="color:#0000ff">await</span><span style="color:#000000"> backend.a</span><span style="color:#319331">(</span><span style="color:#7b3814">{</span><span style="color:#000000"> x: </span><span style="color:#098658">42</span><span style="color:#000000"> </span><span style="color:#7b3814">}</span><span style="color:#319331">)</span><span style="color:#0431fa">)</span></div>
<div style="position:absolute;left:0;top:506px;height:42px;font:400 28px/42px 'Liberation Mono', monospace;letter-spacing:0.057px;white-space:pre"><span style="color:#000000">        </span><span style="color:#7b3814">}</span><span style="color:#000000"> </span><span style="color:#0000ff">catch</span><span style="color:#000000"> </span><span style="color:#7b3814">(</span><span style="color:#000000">e</span><span style="color:#7b3814">)</span><span style="color:#000000"> </span><span style="color:#7b3814">{</span></div>
<div style="position:absolute;left:0;top:548px;height:42px;font:400 28px/42px 'Liberation Mono', monospace;letter-spacing:0.057px;white-space:pre"><span style="color:#000000">            console.error</span><span style="color:#0431fa">()</span></div>
<div style="position:absolute;left:0;top:590px;height:42px;font:400 28px/42px 'Liberation Mono', monospace;letter-spacing:0.057px;white-space:pre"><span style="color:#000000">        </span><span style="color:#7b3814">}</span></div>
<div style="position:absolute;left:0;top:632px;height:42px;font:400 28px/42px 'Liberation Mono', monospace;letter-spacing:0.057px;white-space:pre"><span style="color:#000000">        setLoading</span><span style="color:#7b3814">(</span><span style="color:#0000ff">false</span><span style="color:#7b3814">)</span></div>
<div style="position:absolute;left:0;top:674px;height:42px;font:400 28px/42px 'Liberation Mono', monospace;letter-spacing:0.057px;white-space:pre"><span style="color:#000000">    </span><span style="color:#319331">}</span></div>
<div style="position:absolute;left:0;top:716px;height:42px;font:400 28px/42px 'Liberation Mono', monospace;letter-spacing:0.057px;white-space:pre"></div>
<div style="position:absolute;left:0;top:758px;height:42px;font:400 28px/42px 'Liberation Mono', monospace;letter-spacing:0.057px;white-space:pre"><span style="color:#000000">    </span><span style="color:#0000ff">return</span><span style="color:#000000"> </span><span style="color:#800000">&lt;div</span><span style="color:#000000"> </span><span style="color:#ff0000">style</span><span style="color:#000000">=</span><span style="color:#319331">{</span><span style="color:#7b3814">{</span><span style="color:#000000"> width: </span><span style="color:#a31515">"100%"</span><span style="color:#000000"> </span><span style="color:#7b3814">}</span><span style="color:#319331">}</span><span style="color:#800000">&gt;</span></div>
<div style="position:absolute;left:0;top:800px;height:42px;font:400 28px/42px 'Liberation Mono', monospace;letter-spacing:0.057px;white-space:pre"><span style="color:#000000">        </span><span style="color:#800000">&lt;h1&gt;</span><span style="color:#000000">hello world</span><span style="color:#800000">&lt;/h1&gt;</span></div>
<div style="position:absolute;left:0;top:842px;height:42px;font:400 28px/42px 'Liberation Mono', monospace;letter-spacing:0.057px;white-space:pre"></div>
<div style="position:absolute;left:0;top:884px;height:42px;font:400 28px/42px 'Liberation Mono', monospace;letter-spacing:0.057px;white-space:pre"><span style="color:#000000">        </span><span style="color:#800000">&lt;button</span><span style="color:#000000"> </span><span style="color:#ff0000">style</span><span style="color:#000000">=</span><span style="color:#319331">{</span><span style="color:#7b3814">{</span><span style="color:#000000"> marginTop: </span><span style="color:#a31515">"2px"</span><span style="color:#000000"> </span><span style="color:#7b3814">}</span><span style="color:#319331">}</span><span style="color:#000000"> </span><span style="color:#ff0000">onClick</span><span style="color:#000000">=</span><span style="color:#319331">{</span><span style="color:#000000">runA</span><span style="color:#319331">}</span><span style="color:#800000">&gt;</span><span style="color:#000000">Run 'a'</span><span style="color:#800000">&lt;/button&gt;</span></div>
<div style="position:absolute;left:0;top:926px;height:42px;font:400 28px/42px 'Liberation Mono', monospace;letter-spacing:0.057px;white-space:pre"></div>
<div style="position:absolute;left:0;top:968px;height:42px;font:400 28px/42px 'Liberation Mono', monospace;letter-spacing:0.057px;white-space:pre"><span style="color:#000000">        </span><span style="color:#800000">&lt;div</span><span style="color:#000000"> </span><span style="color:#ff0000">style</span><span style="color:#000000">=</span><span style="color:#319331">{</span><span style="color:#7b3814">{</span><span style="color:#000000"> marginTop: </span><span style="color:#a31515">"20px"</span><span style="color:#000000">, width: </span><span style="color:#a31515">'250px'</span><span style="color:#000000"> </span><span style="color:#7b3814">}</span><span style="color:#319331">}</span><span style="color:#000000"> </span><span style="color:#ff0000">className</span><span style="color:#000000">=</span><span style="color:#a31515">"value-box"</span><span style="color:#800000">&gt;</span></div>
<div style="position:absolute;left:0;top:1010px;height:42px;font:400 28px/42px 'Liberation Mono', monospace;letter-spacing:0.057px;white-space:pre"><span style="color:#000000">            </span><span style="color:#319331">{</span><span style="color:#000000">loading ? </span><span style="color:#a31515">'Loading ...'</span><span style="color:#000000"> : value ?? </span><span style="color:#a31515">'Click button to see value here'</span><span style="color:#319331">}</span></div>
<div style="position:absolute;left:0;top:1052px;height:42px;font:400 28px/42px 'Liberation Mono', monospace;letter-spacing:0.057px;white-space:pre"><span style="color:#000000">        </span><span style="color:#800000">&lt;/div&gt;</span></div>
<div style="position:absolute;left:0;top:1094px;height:42px;font:400 28px/42px 'Liberation Mono', monospace;letter-spacing:0.057px;white-space:pre"><span style="color:#000000">    </span><span style="color:#800000">&lt;/div&gt;</span><span style="color:#000000">;</span></div>
<div style="position:absolute;left:0;top:1136px;height:42px;font:400 28px/42px 'Liberation Mono', monospace;letter-spacing:0.057px;white-space:pre"><span style="color:#0431fa">}</span><span style="color:#000000">;</span></div>
<div style="position:absolute;left:0;top:1178px;height:42px;font:400 28px/42px 'Liberation Mono', monospace;letter-spacing:0.057px;white-space:pre"></div>
<div style="position:absolute;left:0;top:1220px;height:42px;font:400 28px/42px 'Liberation Mono', monospace;letter-spacing:0.057px;white-space:pre"><span style="color:#0000ff">export</span><span style="color:#000000"> </span><span style="color:#0000ff">default</span><span style="color:#000000"> App;</span></div>
<div style="position:absolute;left:0;top:1262px;height:42px;font:400 28px/42px 'Liberation Mono', monospace;letter-spacing:0.057px;white-space:pre"></div>
<svg style="position:absolute;left:657.4px;top:496px" width="18" height="6" viewBox="0 0 18 6"><path d="M0 5 L4.5 1 L9 5 L13.5 1 L18 5" fill="none" stroke="#e51400" stroke-width="1.6"/></svg>
</div>
<div style="position:absolute;left:1803px;top:154px;width:144px;height:1946px;background:#ffffff"></div>
<div style="position:absolute;left:1792px;top:198px;width:11px;height:1902px;background:linear-gradient(90deg,rgba(0,0,0,0),rgba(0,0,0,0.075))"></div>
<div style="position:absolute;left:1811px;top:242px;width:136px;height:4px;background:#f6b9b3"></div>
<div style="position:absolute;left:1811px;top:198px;width:136px;height:200px;overflow:hidden">
<div style="position:absolute;left:0;top:-0.5px;height:4px;font:700 3.333px/4px 'Liberation Mono', monospace;white-space:pre"><span style="color:#0000ff">import</span><span style="color:#000000"> React, </span><span style="color:#0431fa">{</span><span style="color:#000000"> useState </span><span style="color:#0431fa">}</span><span style="color:#000000"> </span><span style="color:#0000ff">from</span><span style="color:#000000"> </span><span style="color:#a31515">'react'</span></div>
<div style="position:absolute;left:0;top:3.5px;height:4px;font:700 3.333px/4px 'Liberation Mono', monospace;white-space:pre"><span style="color:#0000ff">import</span><span style="color:#000000"> </span><span style="color:#0431fa">{</span><span style="color:#000000"> backend </span><span style="color:#0431fa">}</span><span style="color:#000000"> </span><span style="color:#0000ff">from</span><span style="color:#000000"> </span><span style="color:#a31515">'./wmill'</span></div>
<div style="position:absolute;left:0;top:7.5px;height:4px;font:700 3.333px/4px 'Liberation Mono', monospace;white-space:pre"><span style="color:#0000ff">import</span><span style="color:#000000"> </span><span style="color:#a31515">'./index.css'</span></div>
<div style="position:absolute;left:0;top:11.5px;height:4px;font:700 3.333px/4px 'Liberation Mono', monospace;white-space:pre"></div>
<div style="position:absolute;left:0;top:15.5px;height:4px;font:700 3.333px/4px 'Liberation Mono', monospace;white-space:pre"><span style="color:#0000ff">const</span><span style="color:#000000"> App = </span><span style="color:#0431fa">()</span><span style="color:#000000"> </span><span style="color:#0000ff">=&gt;</span><span style="color:#000000"> </span><span style="color:#0431fa">{</span></div>
<div style="position:absolute;left:0;top:19.5px;height:4px;font:700 3.333px/4px 'Liberation Mono', monospace;white-space:pre"><span style="color:#000000">    </span><span style="color:#0000ff">const</span><span style="color:#000000"> </span><span style="color:#319331">[</span><span style="color:#000000">value, setValue</span><span style="color:#319331">]</span><span style="color:#000000"> = useState</span><span style="color:#319331">(</span><span style="color:#0000ff">undefined</span><span style="color:#000000"> </span><span style="color:#0000ff">as</span><span style="color:#000000"> string | undefined</span><span style="color:#319331">)</span></div>
<div style="position:absolute;left:0;top:23.5px;height:4px;font:700 3.333px/4px 'Liberation Mono', monospace;white-space:pre"><span style="color:#000000">    </span><span style="color:#0000ff">const</span><span style="color:#000000"> </span><span style="color:#319331">[</span><span style="color:#000000">loading, setLoading</span><span style="color:#319331">]</span><span style="color:#000000"> = useState</span><span style="color:#319331">(</span><span style="color:#0000ff">false</span><span style="color:#319331">)</span></div>
<div style="position:absolute;left:0;top:27.5px;height:4px;font:700 3.333px/4px 'Liberation Mono', monospace;white-space:pre"></div>
<div style="position:absolute;left:0;top:31.5px;height:4px;font:700 3.333px/4px 'Liberation Mono', monospace;white-space:pre"><span style="color:#000000">    </span><span style="color:#0000ff">async</span><span style="color:#000000"> </span><span style="color:#0000ff">function</span><span style="color:#000000"> runA</span><span style="color:#319331">()</span><span style="color:#000000"> </span><span style="color:#319331">{</span></div>
<div style="position:absolute;left:0;top:35.5px;height:4px;font:700 3.333px/4px 'Liberation Mono', monospace;white-space:pre"><span style="color:#000000">        setLoading</span><span style="color:#7b3814">(</span><span style="color:#0000ff">true</span><span style="color:#7b3814">)</span></div>
<div style="position:absolute;left:0;top:39.5px;height:4px;font:700 3.333px/4px 'Liberation Mono', monospace;white-space:pre"><span style="color:#000000">        </span><span style="color:#0000ff">try</span><span style="color:#000000"> </span><span style="color:#7b3814">{</span></div>
<div style="position:absolute;left:0;top:43.5px;height:4px;font:700 3.333px/4px 'Liberation Mono', monospace;white-space:pre"><span style="color:#000000">            setValue</span><span style="color:#0431fa">(</span><span style="color:#0000ff">await</span><span style="color:#000000"> backend.a</span><span style="color:#319331">(</span><span style="color:#7b3814">{</span><span style="color:#000000"> x: </span><span style="color:#098658">42</span><span style="color:#000000"> </span><span style="color:#7b3814">}</span><span style="color:#319331">)</span><span style="color:#0431fa">)</span></div>
<div style="position:absolute;left:0;top:47.5px;height:4px;font:700 3.333px/4px 'Liberation Mono', monospace;white-space:pre"><span style="color:#000000">        </span><span style="color:#7b3814">}</span><span style="color:#000000"> </span><span style="color:#0000ff">catch</span><span style="color:#000000"> </span><span style="color:#7b3814">(</span><span style="color:#000000">e</span><span style="color:#7b3814">)</span><span style="color:#000000"> </span><span style="color:#7b3814">{</span></div>
<div style="position:absolute;left:0;top:51.5px;height:4px;font:700 3.333px/4px 'Liberation Mono', monospace;white-space:pre"><span style="color:#000000">            console.error</span><span style="color:#0431fa">()</span></div>
<div style="position:absolute;left:0;top:55.5px;height:4px;font:700 3.333px/4px 'Liberation Mono', monospace;white-space:pre"><span style="color:#000000">        </span><span style="color:#7b3814">}</span></div>
<div style="position:absolute;left:0;top:59.5px;height:4px;font:700 3.333px/4px 'Liberation Mono', monospace;white-space:pre"><span style="color:#000000">        setLoading</span><span style="color:#7b3814">(</span><span style="color:#0000ff">false</span><span style="color:#7b3814">)</span></div>
<div style="position:absolute;left:0;top:63.5px;height:4px;font:700 3.333px/4px 'Liberation Mono', monospace;white-space:pre"><span style="color:#000000">    </span><span style="color:#319331">}</span></div>
<div style="position:absolute;left:0;top:67.5px;height:4px;font:700 3.333px/4px 'Liberation Mono', monospace;white-space:pre"></div>
<div style="position:absolute;left:0;top:71.5px;height:4px;font:700 3.333px/4px 'Liberation Mono', monospace;white-space:pre"><span style="color:#000000">    </span><span style="color:#0000ff">return</span><span style="color:#000000"> </span><span style="color:#800000">&lt;div</span><span style="color:#000000"> </span><span style="color:#ff0000">style</span><span style="color:#000000">=</span><span style="color:#319331">{</span><span style="color:#7b3814">{</span><span style="color:#000000"> width: </span><span style="color:#a31515">"100%"</span><span style="color:#000000"> </span><span style="color:#7b3814">}</span><span style="color:#319331">}</span><span style="color:#800000">&gt;</span></div>
<div style="position:absolute;left:0;top:75.5px;height:4px;font:700 3.333px/4px 'Liberation Mono', monospace;white-space:pre"><span style="color:#000000">        </span><span style="color:#800000">&lt;h1&gt;</span><span style="color:#000000">hello world</span><span style="color:#800000">&lt;/h1&gt;</span></div>
<div style="position:absolute;left:0;top:79.5px;height:4px;font:700 3.333px/4px 'Liberation Mono', monospace;white-space:pre"></div>
<div style="position:absolute;left:0;top:83.5px;height:4px;font:700 3.333px/4px 'Liberation Mono', monospace;white-space:pre"><span style="color:#000000">        </span><span style="color:#800000">&lt;button</span><span style="color:#000000"> </span><span style="color:#ff0000">style</span><span style="color:#000000">=</span><span style="color:#319331">{</span><span style="color:#7b3814">{</span><span style="color:#000000"> marginTop: </span><span style="color:#a31515">"2px"</span><span style="color:#000000"> </span><span style="color:#7b3814">}</span><span style="color:#319331">}</span><span style="color:#000000"> </span><span style="color:#ff0000">onClick</span><span style="color:#000000">=</span><span style="color:#319331">{</span><span style="color:#000000">runA</span><span style="color:#319331">}</span><span style="color:#800000">&gt;</span><span style="color:#000000">Run 'a'</span><span style="color:#800000">&lt;/button&gt;</span></div>
<div style="position:absolute;left:0;top:87.5px;height:4px;font:700 3.333px/4px 'Liberation Mono', monospace;white-space:pre"></div>
<div style="position:absolute;left:0;top:91.5px;height:4px;font:700 3.333px/4px 'Liberation Mono', monospace;white-space:pre"><span style="color:#000000">        </span><span style="color:#800000">&lt;div</span><span style="color:#000000"> </span><span style="color:#ff0000">style</span><span style="color:#000000">=</span><span style="color:#319331">{</span><span style="color:#7b3814">{</span><span style="color:#000000"> marginTop: </span><span style="color:#a31515">"20px"</span><span style="color:#000000">, width: </span><span style="color:#a31515">'250px'</span><span style="color:#000000"> </span><span style="color:#7b3814">}</span><span style="color:#319331">}</span><span style="color:#000000"> </span><span style="color:#ff0000">className</span><span style="color:#000000">=</span><span style="color:#a31515">"value-box"</span><span style="color:#800000">&gt;</span></div>
<div style="position:absolute;left:0;top:95.5px;height:4px;font:700 3.333px/4px 'Liberation Mono', monospace;white-space:pre"><span style="color:#000000">            </span><span style="color:#319331">{</span><span style="color:#000000">loading ? </span><span style="color:#a31515">'Loading ...'</span><span style="color:#000000"> : value ?? </span><span style="color:#a31515">'Click button to see value here'</span><span style="color:#319331">}</span></div>
<div style="position:absolute;left:0;top:99.5px;height:4px;font:700 3.333px/4px 'Liberation Mono', monospace;white-space:pre"><span style="color:#000000">        </span><span style="color:#800000">&lt;/div&gt;</span></div>
<div style="position:absolute;left:0;top:103.5px;height:4px;font:700 3.333px/4px 'Liberation Mono', monospace;white-space:pre"><span style="color:#000000">    </span><span style="color:#800000">&lt;/div&gt;</span><span style="color:#000000">;</span></div>
<div style="position:absolute;left:0;top:107.5px;height:4px;font:700 3.333px/4px 'Liberation Mono', monospace;white-space:pre"><span style="color:#0431fa">}</span><span style="color:#000000">;</span></div>
<div style="position:absolute;left:0;top:111.5px;height:4px;font:700 3.333px/4px 'Liberation Mono', monospace;white-space:pre"></div>
<div style="position:absolute;left:0;top:115.5px;height:4px;font:700 3.333px/4px 'Liberation Mono', monospace;white-space:pre"><span style="color:#0000ff">export</span><span style="color:#000000"> </span><span style="color:#0000ff">default</span><span style="color:#000000"> App;</span></div>
<div style="position:absolute;left:0;top:119.5px;height:4px;font:700 3.333px/4px 'Liberation Mono', monospace;white-space:pre"></div>
</div>
<div style="position:absolute;left:1947px;top:154px;width:1px;height:1946px;background:#e3e3e3"></div>
<div style="position:absolute;left:1949px;top:198px;width:23px;height:4px;background:#3c3c3c"></div>
<div style="position:absolute;left:1966px;top:476px;width:6px;height:25px;background:#ea6260"></div>
<div style="position:absolute;left:1972px;top:82px;width:2px;height:2018px;background:#f3f3f3"></div>
<div style="position:absolute;left:1974px;top:82px;width:8px;height:2018px;background:#dcdcdc"></div>
<div style="position:absolute;left:1982px;top:82px;width:1378px;height:2018px;background:#ffffff"></div>
<div style="position:absolute;left:2991px;top:88px;width:133px;height:48px;border-radius:10px;background:#e5e6ea"></div>
<div style="position:absolute;left:3007.00px;top:101.61px;font:400 24px/24px 'Liberation Mono', monospace;color:#111111;white-space:pre;">esbuild</div>
<div style="position:absolute;left:3140px;top:82.5px;width:60px;height:59px;background:#e5e6ea;border-radius:12px"></div>
<svg style="position:absolute;left:3157.00px;top:99.00px;" width="26" height="26" viewBox="0 0 24 24" fill="none" stroke="#111111" stroke-width="2" stroke-linecap="round" stroke-linejoin="round"><path d="M12.034 12.681a.498.498 0 0 1 .647-.647l9 3.5a.5.5 0 0 1-.033.943l-3.444 1.068a1 1 0 0 0-.66.66l-1.067 3.443a.5.5 0 0 1-.943.033z"/><path d="M5 3a2 2 0 0 0-2 2"/><path d="M19 3a2 2 0 0 1 2 2"/><path d="M5 21a2 2 0 0 1-2-2"/><path d="M9 3h1"/><path d="M9 21h2"/><path d="M14 3h1"/><path d="M3 9v1"/><path d="M21 9v2"/><path d="M3 14v1"/></svg>
<div style="position:absolute;left:3216px;top:84px;width:56px;height:56px;background:#e5e6ea;border-radius:12px"></div>
<svg style="position:absolute;left:3232.00px;top:100.00px;" width="24" height="24" viewBox="0 0 24 24" fill="none" stroke="#111111" stroke-width="2.2" stroke-linecap="round" stroke-linejoin="round"><path d="M21 13v6a2 2 0 0 1-2 2H5a2 2 0 0 1-2-2V5a2 2 0 0 1 2-2h6"/><path d="m21 3-9 9"/><path d="M15 3h6v6"/></svg>
<div style="position:absolute;left:3288px;top:84px;width:56px;height:56px;background:#e5e6ea;border-radius:12px"></div>
<svg style="position:absolute;left:3304.00px;top:100.00px;" width="24" height="24" viewBox="0 0 24 24" fill="none" stroke="#111111" stroke-width="2.2" stroke-linecap="round" stroke-linejoin="round"><path d="M3 12a9 9 0 0 1 9-9 9.75 9.75 0 0 1 6.74 2.74L21 8"/><path d="M21 3v5h-5"/><path d="M21 12a9 9 0 0 1-9 9 9.75 9.75 0 0 1-6.74-2.74L3 16"/><path d="M8 16H3v5"/></svg>
<div style="position:absolute;left:1999.00px;top:130.10px;font:700 64px/64px 'Liberation Serif', serif;color:#000000;white-space:pre;">hello world</div>
<div style="position:absolute;left:1998.2px;top:246.2px;width:108.4px;height:38.3px;border:2px solid #767676;border-radius:6px;background:#efefef"></div>
<div style="position:absolute;left:2015.50px;top:253.12px;font:400 26.67px/26.67px 'Liberation Sans', sans-serif;color:#000000;white-space:pre;">Run 'a'</div>
<div style="position:absolute;left:1998.5px;top:329px;width:507px;height:45px;border:2px solid #767676"></div>
<div style="position:absolute;left:2003.60px;top:336.80px;font:400 32px/32px 'Liberation Serif', serif;color:#000000;white-space:pre;">Click button to see value here</div>
<div style="position:absolute;left:2360px;top:1620px;width:996px;height:500px;border:2px solid #e3e5e9;border-radius:12px 12px 0 0;background:#f9fafb;overflow:hidden">
<div style="position:absolute;left:0;top:0;width:985px;height:500px;overflow:hidden">
<div style="position:absolute;left:8px;top:24.6px;font:400 24px/24px 'Liberation Mono', monospace;color:#394151;white-space:pre">initializing esbuild worker...</div>
<div style="position:absolute;left:8px;top:57.3px;font:400 24px/24px 'Liberation Mono', monospace;color:#394151;white-space:pre">Using idb cache for csstype@3.2.3 …</div>
<div style="position:absolute;left:8px;top:121.6px;font:400 24px/24px 'Liberation Mono', monospace;color:#394151;white-space:pre">[esbuild] Build started...</div>
<div style="position:absolute;left:8px;top:153.6px;font:400 24px/24px 'Liberation Mono', monospace;color:#394151;white-space:pre">updated node_modules/</div>
<div style="position:absolute;left:8px;top:185.6px;font:400 24px/24px 'Liberation Mono', monospace;color:#394151;white-space:pre">updated node_modules/</div>
<div style="position:absolute;left:8px;top:217.6px;font:400 24px/24px 'Liberation Mono', monospace;color:#394151;white-space:pre">updated node_modules/</div>
<div style="position:absolute;left:8px;top:249.6px;font:400 24px/24px 'Liberation Mono', monospace;color:#394151;white-space:pre">[esbuild] Build failed: You need to wait for the promise returned from build()</div>
<div style="position:absolute;left:8px;top:313.6px;font:400 24px/24px 'Liberation Mono', monospace;color:#394151;white-space:pre">esbuild worker initialized</div>
<div style="position:absolute;left:8px;top:377.6px;font:400 24px/24px 'Liberation Mono', monospace;color:#394151;white-space:pre">[esbuild] Build started...</div>
<div style="position:absolute;left:8px;top:409.6px;font:400 24px/24px 'Liberation Mono', monospace;color:#394151;white-space:pre">[esbuild] Build successful in 0.45s</div>
</div>
<div style="position:absolute;left:0;top:0;width:996px;height:36px;background:#f9fafb"></div>
</div>
<div style="position:absolute;left:2386.50px;top:1630.18px;font:400 24px/24px 'Liberation Sans', sans-serif;color:#394151;white-space:pre;">Logs</div>
<svg style="position:absolute;left:2457.00px;top:1631.00px;" width="22" height="22" viewBox="0 0 24 24" fill="none" stroke="#2d3748" stroke-width="2" stroke-linecap="round" stroke-linejoin="round"><path d="m6 9 6 6 6-6"/></svg>
<div style="position:absolute;left:2498.50px;top:1630.18px;font:400 24px/24px 'Liberation Sans', sans-serif;color:#9aa1ad;white-space:pre;">(77)</div>
</div></body></html>
